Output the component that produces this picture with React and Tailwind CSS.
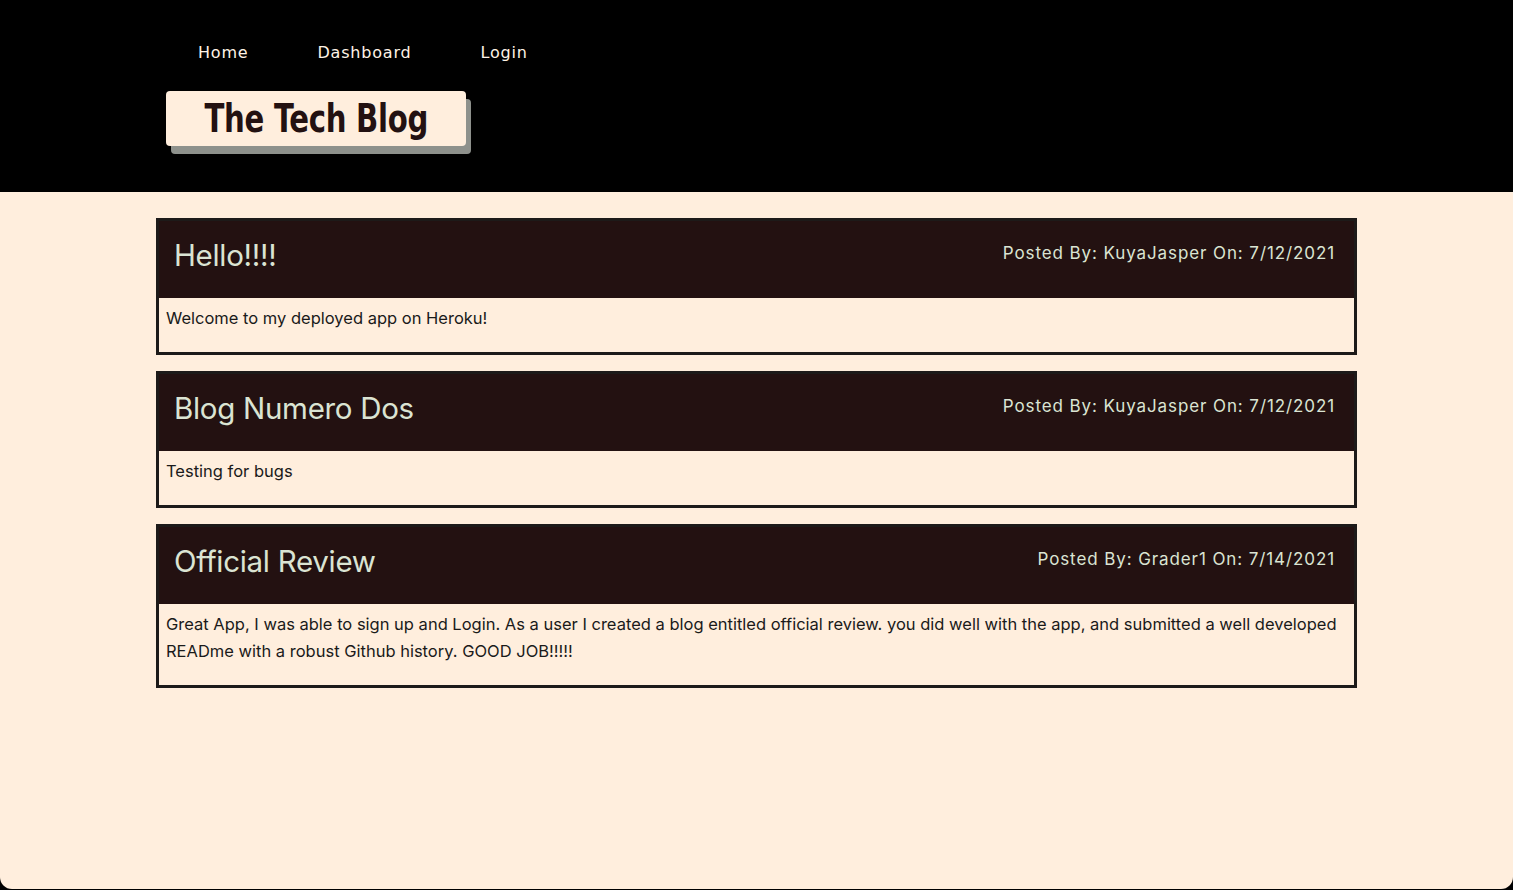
const posts = [
  {
    title: "Hello!!!!",
    author: "KuyaJasper",
    date: "7/12/2021",
    body: "Welcome to my deployed app on Heroku!",
  },
  {
    title: "Blog Numero Dos",
    author: "KuyaJasper",
    date: "7/12/2021",
    body: "Testing for bugs",
  },
  {
    title: "Official Review",
    author: "Grader1",
    date: "7/14/2021",
    body: "Great App, I was able to sign up and Login. As a user I created a blog entitled official review. you did well with the app, and submitted a well developed READme with a robust Github history. GOOD JOB!!!!!",
  },
];

function Post({ post }) {
  return (
    <div className="border-[3px] border-[#1d1a19] bg-[#ffeedd]">
      <div className="flex justify-between items-start bg-[#231111] h-[77px] pl-[15px] pr-[19px]">
        <h2 className="text-[29.5px] text-[#dbe4d3] mt-[14px] leading-[40px] tracking-[-0.3px]">
          {post.title}
        </h2>
        <p className="text-[17px] text-[#dbe4d3] mt-[20px] tracking-[0.9px] leading-[24px]">
          Posted By: {post.author} On: {post.date}
        </p>
      </div>
      <p className="px-[7px] pt-[7px] pb-[20px] text-[16.5px] leading-[27px] text-[#1a1a1a]">
        {post.body}
      </p>
    </div>
  );
}

export default function App() {
  return (
    <div className="bg-black min-h-[890px] h-[890px] flex flex-col">
      <header className="bg-black h-[192px] shrink-0 pl-[166px]">
        <nav className="flex pt-[41px] pl-[32px] gap-[69px] font-['DejaVu_Sans',sans-serif] text-[16px] text-[#fff3e6] tracking-[0.8px] leading-[24px]">
          <a href="#">Home</a>
          <a href="#">Dashboard</a>
          <a href="#">Login</a>
        </nav>
        <div className="mt-[26px] w-[300px] h-[55px] bg-[#ffeedd] rounded-[4px] shadow-[5px_8px_0_#8e918c] flex items-center justify-center">
          <h1 className="font-['DejaVu_Sans_Condensed',sans-serif] font-bold text-[36px] text-[#231111] leading-none scale-x-[0.9] scale-y-[1.08] tracking-[-0.3px]">
            The Tech Blog
          </h1>
        </div>
      </header>
      <main className="flex-1 bg-[#ffeedd] rounded-b-[12px] font-['Inter',sans-serif] pt-[26px] px-[156px] flex flex-col gap-[16px] mb-[1px]">
        {posts.map((post) => (
          <Post key={post.title} post={post} />
        ))}
      </main>
    </div>
  );
}
